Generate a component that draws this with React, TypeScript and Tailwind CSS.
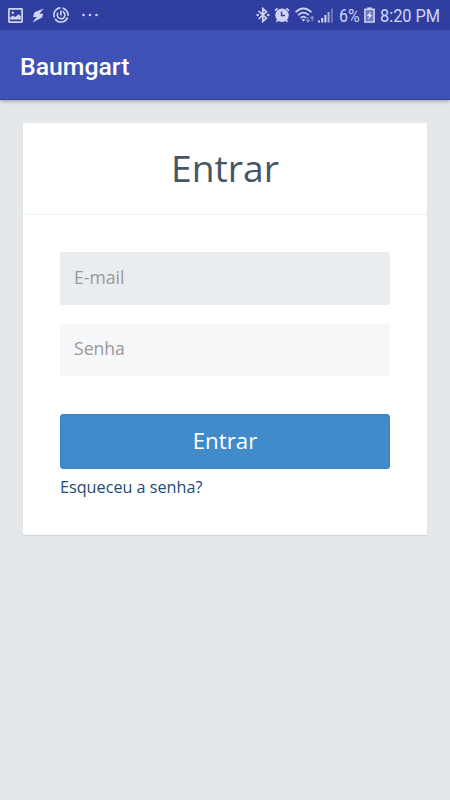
import React from "react";

function ImageIcon() {
  return (
    <svg width="15" height="15" viewBox="0 0 15 15" className="shrink-0">
      <rect x="0.9" y="0.9" width="13.2" height="13.2" rx="0.6" fill="none" stroke="currentColor" strokeWidth="1.7" />
      <path d="M2.2 11.6V9.4L4.8 7.6L7.2 9L10.6 6.2L12.8 8.2V11.6Z" fill="currentColor" />
      <circle cx="4.8" cy="4.8" r="1.2" fill="currentColor" />
    </svg>
  );
}

function BoltIcon() {
  return (
    <svg width="12" height="15" viewBox="0 0 12 15" className="shrink-0">
      <path d="M11.6 0.6L2.4 4.2L1 9H4.6L0.4 14.4L10.2 9.6L11.2 5.8H7.4Z" fill="currentColor" />
    </svg>
  );
}

function SwirlIcon() {
  return (
    <svg width="16" height="16" viewBox="0 0 16 16" className="shrink-0" fill="none" stroke="currentColor" strokeWidth="1.6">
      <path d="M9.6 1.1A7.1 7.1 0 0 1 15 8.8M14.6 10.4A7.1 7.1 0 0 1 2.1 12M1.3 10.4A7.1 7.1 0 0 1 7.4 0.9" />
      <path d="M9.6 4.5A3.8 3.8 0 1 1 5 5.7M7.9 3.4V8.6" />
    </svg>
  );
}

function MoreIcon() {
  return (
    <svg width="16" height="4" viewBox="0 0 16 4" className="shrink-0" fill="currentColor">
      <circle cx="1.5" cy="2" r="1.3" />
      <circle cx="8" cy="2" r="1.3" />
      <circle cx="14.5" cy="2" r="1.3" />
    </svg>
  );
}

function BluetoothIcon() {
  return (
    <svg width="14" height="16" viewBox="0 0 14 16" className="shrink-0">
      <path d="M2.6 4L10.4 11.2L6.8 14.4V1.6L10.4 4.8L2.6 12" fill="none" stroke="currentColor" strokeWidth="1.7" />
      <circle cx="1.7" cy="8" r="1.3" fill="currentColor" />
      <circle cx="12.2" cy="8" r="1.3" fill="currentColor" />
    </svg>
  );
}

function AlarmIcon() {
  return (
    <svg width="16" height="16" viewBox="0 0 16 16" className="shrink-0">
      <path d="M1 3.6L3.6 1.4M15 3.6L12.4 1.4M3.8 13L2.6 14.8M12.2 13L13.4 14.8" stroke="currentColor" strokeWidth="1.8" />
      <circle cx="8" cy="8.2" r="6.7" fill="currentColor" />
      <path d="M7.5 4.4V8.5H11" fill="none" stroke="#303f9f" strokeWidth="1.4" />
    </svg>
  );
}

function WifiIcon() {
  return (
    <svg width="20" height="16" viewBox="0 0 20 16" className="shrink-0" fill="none" stroke="currentColor">
      <path d="M0.6 5.2Q8.4 -2.4 16.4 5.2M3.1 8.2Q8.4 3 13.8 8.2M5.6 11Q8.4 8.2 11.2 11" strokeWidth="1.7" />
      <path d="M6.6 12.6Q8.4 11.2 10.2 12.6L8.4 14.6Z" fill="currentColor" stroke="none" />
      <path d="M13 15V10.2M11.2 13L13 14.9L14.8 13M17.2 9.4V14.2M15.4 11.4L17.2 9.5L19 11.4" strokeWidth="1.2" opacity="0.55" />
    </svg>
  );
}

function SignalIcon() {
  return (
    <svg width="15" height="15" viewBox="0 0 15 15" className="shrink-0" fill="currentColor">
      <rect x="0" y="12.5" width="2" height="2" />
      <rect x="3.2" y="10" width="2" height="4.5" />
      <rect x="6.4" y="7" width="2" height="7.5" />
      <rect x="9.6" y="4" width="2" height="10.5" opacity="0.75" />
      <rect x="13" y="0.5" width="1.8" height="14" opacity="0.4" />
    </svg>
  );
}

function BatteryIcon() {
  return (
    <svg width="11" height="16" viewBox="0 0 11 16" className="shrink-0">
      <rect x="3.3" y="0.4" width="4.4" height="2" fill="currentColor" />
      <rect x="0.9" y="2.3" width="9.2" height="12.7" fill="currentColor" fillOpacity="0.4" stroke="currentColor" strokeWidth="1.5" />
      <path d="M6.7 4.2L2.7 9.1H5L4.2 13L8.3 7.8H6Z" fill="#e2e5ff" />
    </svg>
  );
}

function StatusBar() {
  return (
    <div className="flex h-[30px] items-center bg-[#303f9f] pl-2 pr-[10px] text-[#cfd3f4]">
      <ImageIcon />
      <div className="ml-[9px] flex"><BoltIcon /></div>
      <div className="ml-[9px] flex"><SwirlIcon /></div>
      <div className="ml-[13px] flex"><MoreIcon /></div>
      <div className="ml-auto flex items-center">
        <BluetoothIcon />
        <div className="ml-1 flex"><AlarmIcon /></div>
        <div className="ml-[5px] flex"><WifiIcon /></div>
        <div className="ml-[3px] flex"><SignalIcon /></div>
        <span className="ml-[6px] flex h-5 w-[20px] items-center whitespace-nowrap pt-[2px]"><span className="origin-left scale-x-[.84] text-[19px] leading-5">6%</span></span>
        <div className="ml-[5px] flex"><BatteryIcon /></div>
        <span className="ml-[5px] flex h-5 w-[60px] items-center whitespace-nowrap pt-[2px]"><span className="origin-left scale-x-[.86] text-[19px] leading-5">8:20 PM</span></span>
      </div>
    </div>
  );
}

export default function App() {
  return (
    <div className="flex h-[800px] w-[450px] flex-col overflow-hidden bg-[#e4e8eb] font-['Roboto',sans-serif]">
      <header className="z-10 shrink-0 shadow-[0_1px_4px_rgba(0,0,0,0.35)]">
        <StatusBar />
        <div className="flex h-[70px] items-center border-b border-[#303f9f] bg-[#3f51b5] px-5 pt-[4px]">
          <h1 className="text-[24.8px] font-medium leading-8 text-white">Baumgart</h1>
        </div>
      </header>
      <main className="mx-[23px] mt-[23px] h-[412px] w-[404px] bg-white font-['Open_Sans',sans-serif] shadow-[0_1px_1px_rgba(0,0,0,0.08)]">
        <div className="flex h-[92px] items-center justify-center border-b border-[#edf0f1] pb-[2px]">
          <h2 className="text-[37.2px] leading-[52px] text-[#465563]">Entrar</h2>
        </div>
        <form className="flex flex-col px-[37px] pt-[37px]" onSubmit={(event) => event.preventDefault()}>
          <input type="email" placeholder="E-mail" className="h-[53px] w-full rounded-[2px] bg-[#eaedf0] px-[14px] pb-[4px] text-[17.6px] text-[#465563] outline-none placeholder:text-[#999999]" />
          <input type="password" placeholder="Senha" className="mt-[19px] h-[52px] w-full rounded-[2px] bg-[#f6f7f9] px-[14px] pb-[4px] text-[17.6px] text-[#465563] outline-none placeholder:text-[#999999]" />
          <button type="submit" className="mt-[38px] h-[55px] w-full rounded-[3px] border border-[#3a83c2] bg-[#428bca] pb-[2px] text-[22.3px] leading-8 text-white">Entrar</button>
          <a href="#" className="mt-[6px] self-start text-[16.2px] leading-6 text-[#1b4b7a]">Esqueceu a senha?</a>
        </form>
      </main>
    </div>
  );
}
